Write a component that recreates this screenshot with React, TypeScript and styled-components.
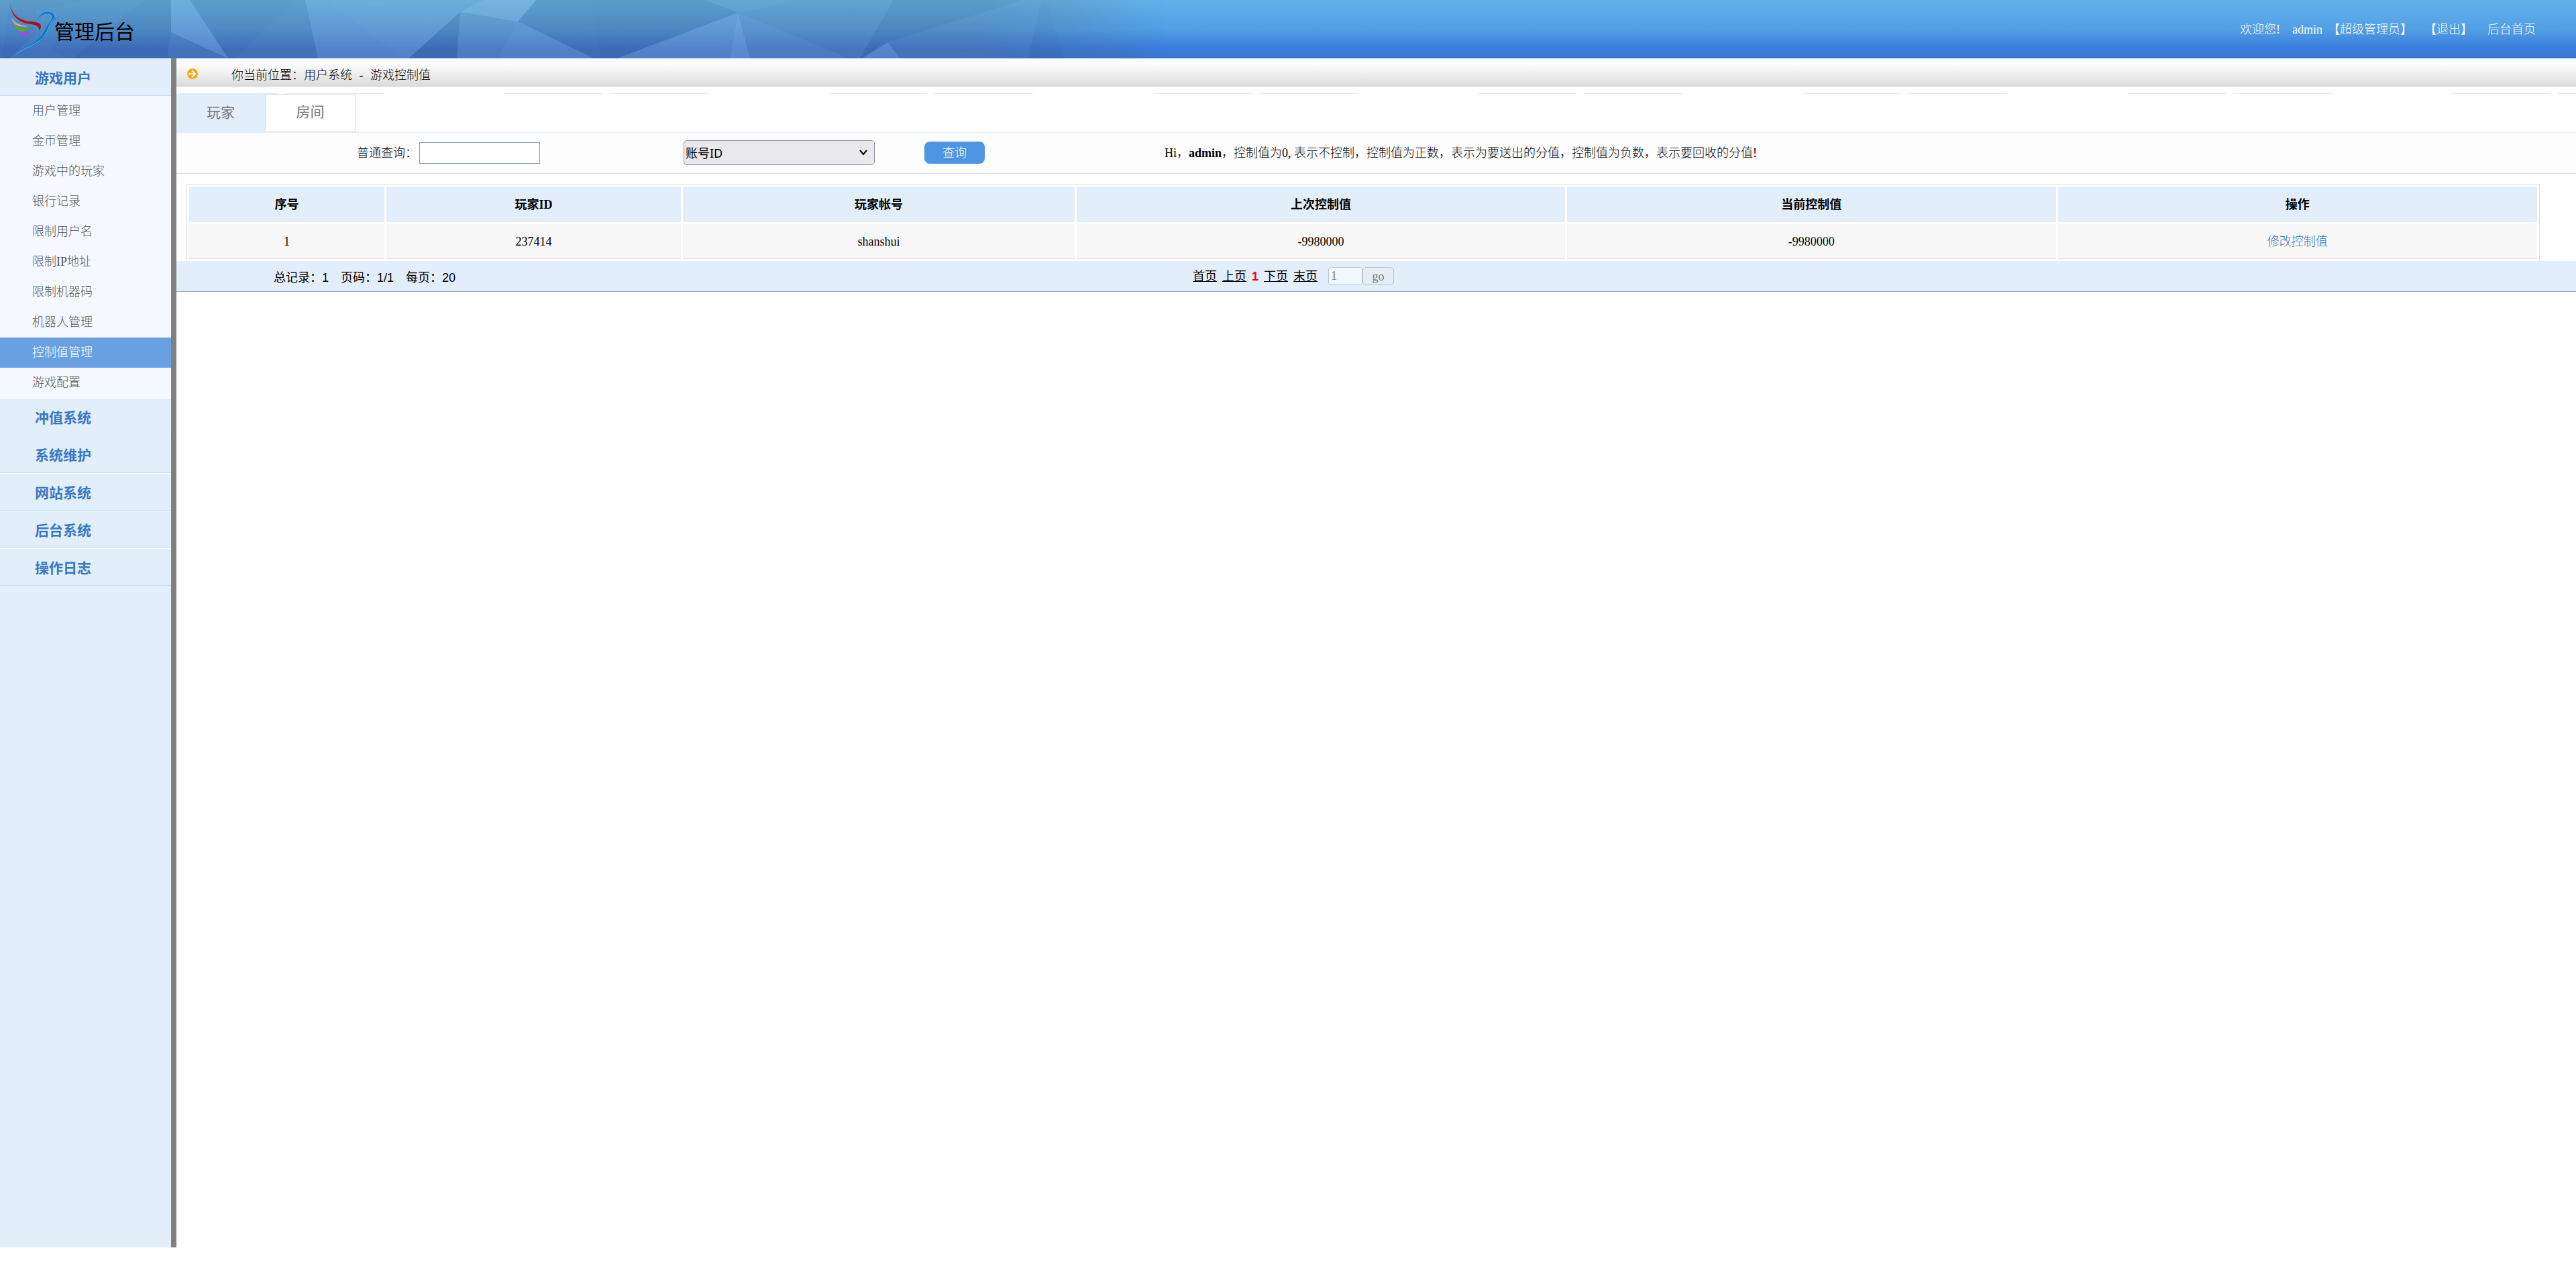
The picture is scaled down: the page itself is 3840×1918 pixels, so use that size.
import React, { useState } from "react";
import styled, { createGlobalStyle } from "styled-components";

const serif = `"Liberation Serif", "Noto Sans CJK SC", serif`;
const sans = `"Liberation Sans", "Noto Sans CJK SC", sans-serif`;
const pale = "#e2eefa";
const line = "#dddddd";

const GlobalStyle = createGlobalStyle`
  * { box-sizing: border-box; }
  body {
    margin: 0;
    background: #fff;
    color: #000;
    font: 300 18px/24px ${serif};
  }
  a { color: inherit; text-decoration: none; }
  b { font-weight: 700; }
  ul { margin: 0; padding: 0; list-style: none; }
`;

const Page = styled.div`
  display: flex;
  flex-direction: column;
  min-height: calc(100vh - 59px);
`;

const TopBar = styled.header`
  position: relative;
  display: flex;
  align-items: center;
  justify-content: space-between;
  height: 87px;
  padding-right: 60px;
  overflow: hidden;
  background: linear-gradient(#63b2ec, #529fe4 50%, #3b7edd 82%, #3875ce);
`;

const Facets = styled.svg`
  position: absolute;
  top: 0;
  left: 0;
`;

const Brand = styled.div`
  position: relative;
  display: flex;
  align-items: center;
`;

const BrandName = styled.span`
  margin: 8px 0 0 -12px;
  font: 400 30px/40px ${sans};
`;

const UserLinks = styled.nav`
  position: relative;
  display: flex;
  color: #fff;

  a:last-child { margin-left: 22px; }
`;

const Greeting = styled.span`
  margin-right: 18px;
`;

const Role = styled.span`
  margin: 0 18px 0 8px;
`;

const Body = styled.div`
  display: flex;
  flex: 1;
`;

const Sidebar = styled.nav`
  width: 263px;
  flex: none;
  border-right: 8px solid #808080;
  background: ${pale};
`;

const GroupTitle = styled.button`
  display: block;
  width: 100%;
  height: 56px;
  padding: 4px 0 0 52px;
  border: solid;
  border-width: 1px 0;
  border-color: #fff transparent #c1ddfb;
  background: ${pale};
  background-clip: padding-box;
  color: #3777c7;
  font: 700 21px/32px ${sans};
  text-align: left;
`;

const Items = styled.ul`
  background: #f5f9ff;
`;

const Item = styled.a<{ $active?: boolean }>`
  display: block;
  padding-left: 48px;
  background: ${(p) => (p.$active ? "#69a0e1" : "transparent")};
  color: ${(p) => (p.$active ? "#fff" : "#555")};
  line-height: 45px;
`;

const Main = styled.main`
  flex: 1;
  min-width: 0;
`;

const Crumbs = styled.div`
  display: flex;
  align-items: center;
  gap: 49px;
  height: 43px;
  padding: 4px 0 0 16px;
  border-bottom: 1px solid #ebebeb;
  background: linear-gradient(#fff 15%, #dadada);
`;

const CrumbText = styled.span`
  padding-top: 3px;
`;

const Dash = styled.span`
  margin: 0 6px;
`;

const Tabs = styled.div`
  display: flex;
  height: 68px;
  padding-top: 10px;
  border-bottom: 1px solid ${pale};
  background: 0 9px / 484px 1px repeat-x
    linear-gradient(90deg, transparent 5px, #dceaf1 5px 151px, transparent 151px 162px, #dceaf1 162px 309px, transparent 309px);
`;

const Tab = styled.button<{ $active?: boolean }>`
  width: ${(p) => (p.$active ? "132px" : "135px")};
  height: ${(p) => (p.$active ? "58px" : "57px")};
  padding: 0 0 3px;
  border: ${(p) => (p.$active ? "0" : `1px solid ${line}`)};
  background: ${(p) => (p.$active ? pale : "#fff")};
  color: #777;
  font: 400 21px/32px ${serif};
`;

const SearchBar = styled.form`
  display: grid;
  grid-template-columns: 487fr 359fr 358fr 2104fr;
  align-items: center;
  height: 61px;
  padding: 0 0 1px 269px;
  border-bottom: 1px solid ${line};
  background: #fdfdfd;
`;

const Field = styled.div`
  display: flex;
  align-items: center;
  gap: 3px;
`;

const QueryInput = styled.input`
  width: 180px;
  height: 32px;
  padding: 0 4px;
  border: 1px solid #7f9db9;
  background: #fff;
  font: inherit;
`;

const SelectBox = styled.div`
  position: relative;
  width: 285px;
`;

const Select = styled.select`
  appearance: none;
  display: block;
  width: 100%;
  height: 37px;
  padding: 0 2px;
  border: 1px solid #8f8f9d;
  border-radius: 5px;
  background: #e9e9ed;
  color: #000;
  font: 400 18px/24px "Noto Sans", "Noto Sans CJK SC", sans-serif;
`;

const Chevron = styled.svg`
  position: absolute;
  top: 14px;
  right: 11px;
  pointer-events: none;
`;

const QueryButton = styled.button`
  display: block;
  width: 90px;
  height: 33px;
  padding: 0;
  border: 0;
  border-radius: 8px;
  background: #4d96e4;
  color: #fff;
  font: inherit;
`;

const Hint = styled.p`
  margin: 0;
`;

const TableWrap = styled.div`
  margin: 15px 54px 0 15px;
  border: 1px solid ${line};
  border-bottom: 0;
`;

const Table = styled.table`
  width: 100%;
  table-layout: fixed;
  border-spacing: 3px;
  text-align: center;

  th, td { padding: 0; }
  th { height: 53px; background: ${pale}; font-weight: 700; }
  td { height: 52px; border-bottom: 1px solid ${line}; background: #f7f7f7; }
  a { color: #3777c7; }
`;

const Col = styled.col<{ $share?: number }>`
  width: ${(p) => (p.$share ? `${p.$share}%` : "auto")};
`;

const Footer = styled.div`
  display: grid;
  grid-template-columns: 1370fr 2062fr;
  align-items: center;
  height: 46px;
  padding-left: 145px;
  border-bottom: 1px solid #96a8b3;
  background: ${pale};
  font: 400 18px/24px ${sans};
`;

const Totals = styled.div`
  display: flex;
  gap: 18px;
  padding-top: 4px;
`;

const Pager = styled.div`
  display: flex;
  align-items: center;
  gap: 8px;

  a { text-decoration: underline; }
  strong { color: #f00; }
`;

const Jump = styled.form`
  display: flex;
  margin-left: 8px;
`;

const PageInput = styled.input`
  width: 51px;
  height: 27px;
  padding: 0 3px;
  border: 1px solid #bfc3cf;
  border-radius: 4px;
  background: #f2f7fe;
  color: #777;
  font: 400 18px/24px ${serif};
`;

const GoButton = styled.button`
  width: 47px;
  height: 27px;
  padding: 0;
  border: 1px solid #bfc3cf;
  border-radius: 6px;
  background: #e5ecf5;
  color: #777;
  font: 400 18px/24px ${serif};
`;

const userItems = [
  "用户管理", "金币管理", "游戏中的玩家", "银行记录", "限制用户名",
  "限制IP地址", "限制机器码", "机器人管理", "控制值管理", "游戏配置",
];
const groups = ["冲值系统", "系统维护", "网站系统", "后台系统", "操作日志"];
const columns: { title: string; share?: number }[] = [
  { title: "序号", share: 8.35 },
  { title: "玩家ID", share: 12.6 },
  { title: "玩家帐号", share: 16.75 },
  { title: "上次控制值", share: 20.9 },
  { title: "当前控制值", share: 20.9 },
  { title: "操作" },
];

function HeaderFacets() {
  return (
    <Facets width="1740" height="87" viewBox="0 0 1740 87" aria-hidden="true">
      <defs>
        <linearGradient id="shade" x1="0" y1="0" x2="0" y2="1">
          <stop offset="0" stopColor="#5c9dc8" />
          <stop offset=".5" stopColor="#4b87c2" />
          <stop offset=".85" stopColor="#3b6ab6" />
          <stop offset="1" stopColor="#396bb3" />
        </linearGradient>
        <linearGradient id="facet" gradientUnits="userSpaceOnUse" x1="0" y1="0" x2="0" y2="87">
          <stop offset="0" stopColor="#8fd0f8" />
          <stop offset="1" stopColor="#82b0f5" />
        </linearGradient>
        <linearGradient id="fade" x1="0" y1="0" x2="1" y2="0">
          <stop offset="0.84" stopColor="#fff" />
          <stop offset="0.92" stopColor="#999" />
          <stop offset="1" stopColor="#000" />
        </linearGradient>
        <mask id="fadeMask"><rect width="1740" height="87" fill="url(#fade)" /></mask>
      </defs>
      <g mask="url(#fadeMask)">
        <rect width="1740" height="87" fill="url(#shade)" />
        <g fill="url(#facet)">
          <path d="M0 0H15L3 87H0Z" opacity=".05" />
          <path d="M54 50L14 87H95Z" opacity=".1" />
          <path d="M54 16L130 0H215L110 87H95L54 50Z" opacity=".06" />
          <path d="M255 0H283L340 87L255 48Z" opacity=".38" />
          <path d="M255 48L340 87H249Z" opacity=".1" />
          <path d="M283 0H440L352 87H340Z" opacity=".04" />
          <path d="M440 0H455L474 87H352Z" opacity=".09" />
          <path d="M455 0H719L686 18L609 87H474Z" opacity=".32" />
          <path d="M487 0H540L686 18L609 87H600Z" opacity=".05" />
          <path d="M719 0H799L772 32L686 18Z" opacity=".48" />
          <path d="M686 18L772 32L741 87H681Z" opacity=".24" />
          <path d="M772 32L885 87H741Z" opacity=".3" />
          <path d="M799 0H880L895 87H885L772 32Z" opacity=".03" />
          <path d="M1051 0H1195L1100 19Z" opacity=".2" />
          <path d="M1195 0H1332L1282 87H1266L1100 19Z" opacity=".14" />
          <path d="M1100 19L920 87H1088Z" opacity=".32" />
          <path d="M1100 19L1088 87H1118Z" opacity=".42" />
          <path d="M1100 19L1118 87H1266Z" opacity=".22" />
          <path d="M1323 63L1285 87H1342Z" opacity=".35" />
          <path d="M1323 63L1525 0H1552L1533 87H1342Z" opacity=".11" />
          <path d="M1560 0L1586 87H1740V0Z" opacity=".05" />
        </g>
      </g>
    </Facets>
  );
}

function Bird() {
  return (
    <svg width="93" height="87" viewBox="0 0 93 87" aria-hidden="true">
      <path d="M15 4C16 17 23 28 39 31C52 33 61 33 61 39C61 42 60 44 58 45C58 39 54 37 46 36C27 34 16 23 15 4Z" fill="#a90f1f" />
      <path d="M15 4C17 17 24 27 40 31L45 33C25 30 17 19 15 4Z" fill="#dc2a38" />
      <path d="M17 26C21 34 29 38 42 39C28 42 19 37 17 26Z" fill="#f59a78" />
      <path d="M20 38Q30 45 44 40Q42 46 33 47Q24 46 20 38Z" fill="#55a532" />
      <path d="M27 47Q35 51 44 47Q41 53 36 53Q30 53 27 47Z" fill="#b63ee0" />
      <path d="M55 30C59 21 66 17 73 18C79 19 82 22 81 26L91 23C83 26 79 31 75 38C71 47 68 55 58 63C46 71 32 73 22 84C29 74 41 70 51 63C62 56 65 49 69 41C72 35 76 31 78 27C78 17 63 18 55 30Z" fill="#0d79c8" />
      <path d="M86 24C79 28 76 33 73 40C70 49 66 56 57 62C45 70 32 74 24 81" fill="none" stroke="#58bdf0" strokeWidth="1" />
      <path d="M67 27Q70 24 73 27" fill="none" stroke="#2c8dcf" strokeWidth="1" />
    </svg>
  );
}

function ArrowBadge() {
  return (
    <svg width="17" height="17" viewBox="0 0 17 17" aria-hidden="true">
      <circle cx="8" cy="8" r="8" fill="#ffa60d" />
      <path d="M2 8H12M7 3L12 8L7 13" fill="none" stroke="#fff" strokeWidth="2" />
    </svg>
  );
}

export default function App() {
  const [query, setQuery] = useState("");
  const [page, setPage] = useState("1");
  const stay = (e: React.FormEvent) => e.preventDefault();

  return (
    <Page>
      <GlobalStyle />
      <TopBar>
        <HeaderFacets />
        <Brand>
          <Bird />
          <BrandName>管理后台</BrandName>
        </Brand>
        <UserLinks>
          <Greeting>欢迎您!</Greeting>
          <span>admin</span>
          <Role>【超级管理员】</Role>
          <a href="#logout">【退出】</a>
          <a href="#home">后台首页</a>
        </UserLinks>
      </TopBar>
      <Body>
        <Sidebar>
          <GroupTitle type="button">游戏用户</GroupTitle>
          <Items>
            {userItems.map((name) => (
              <li key={name}>
                <Item href="#item" $active={name === "控制值管理"}>{name}</Item>
              </li>
            ))}
          </Items>
          {groups.map((name) => (
            <GroupTitle type="button" key={name}>{name}</GroupTitle>
          ))}
        </Sidebar>
        <Main>
          <Crumbs>
            <ArrowBadge />
            <CrumbText>你当前位置：用户系统<Dash> - </Dash>游戏控制值</CrumbText>
          </Crumbs>
          <Tabs>
            <Tab type="button" $active>玩家</Tab>
            <Tab type="button">房间</Tab>
          </Tabs>
          <SearchBar onSubmit={stay}>
            <Field>
              <label htmlFor="query">普通查询：</label>
              <QueryInput id="query" type="text" value={query} onChange={(e) => setQuery(e.target.value)} />
            </Field>
            <SelectBox>
              <Select aria-label="查询类型" defaultValue="id">
                <option value="id">账号ID</option>
              </Select>
              <Chevron width="12" height="9" viewBox="0 0 12 9" aria-hidden="true">
                <path d="M1 1L6 7L11 1" fill="none" stroke="#000" strokeWidth="2" />
              </Chevron>
            </SelectBox>
            <div><QueryButton type="submit">查询</QueryButton></div>
            <Hint>
              Hi，<b>admin</b>，控制值为0, 表示不控制，控制值为正数，表示为要送出的分值，控制值为负数，表示要回收的分值!
            </Hint>
          </SearchBar>
          <TableWrap>
            <Table>
              <colgroup>
                {columns.map((c) => <Col key={c.title} $share={c.share} />)}
              </colgroup>
              <thead>
                <tr>{columns.map((c) => <th key={c.title} scope="col">{c.title}</th>)}</tr>
              </thead>
              <tbody>
                <tr>
                  <td>1</td>
                  <td>237414</td>
                  <td>shanshui</td>
                  <td>-9980000</td>
                  <td>-9980000</td>
                  <td><a href="#edit">修改控制值</a></td>
                </tr>
              </tbody>
            </Table>
          </TableWrap>
          <Footer>
            <Totals>
              <span>总记录：1</span>
              <span>页码：1/1</span>
              <span>每页：20</span>
            </Totals>
            <Pager>
              <a href="#first">首页</a>
              <a href="#prev">上页</a>
              <strong>1</strong>
              <a href="#next">下页</a>
              <a href="#last">末页</a>
              <Jump onSubmit={stay}>
                <PageInput aria-label="页码" value={page} onChange={(e) => setPage(e.target.value)} />
                <GoButton type="submit">go</GoButton>
              </Jump>
            </Pager>
          </Footer>
        </Main>
      </Body>
    </Page>
  );
}
